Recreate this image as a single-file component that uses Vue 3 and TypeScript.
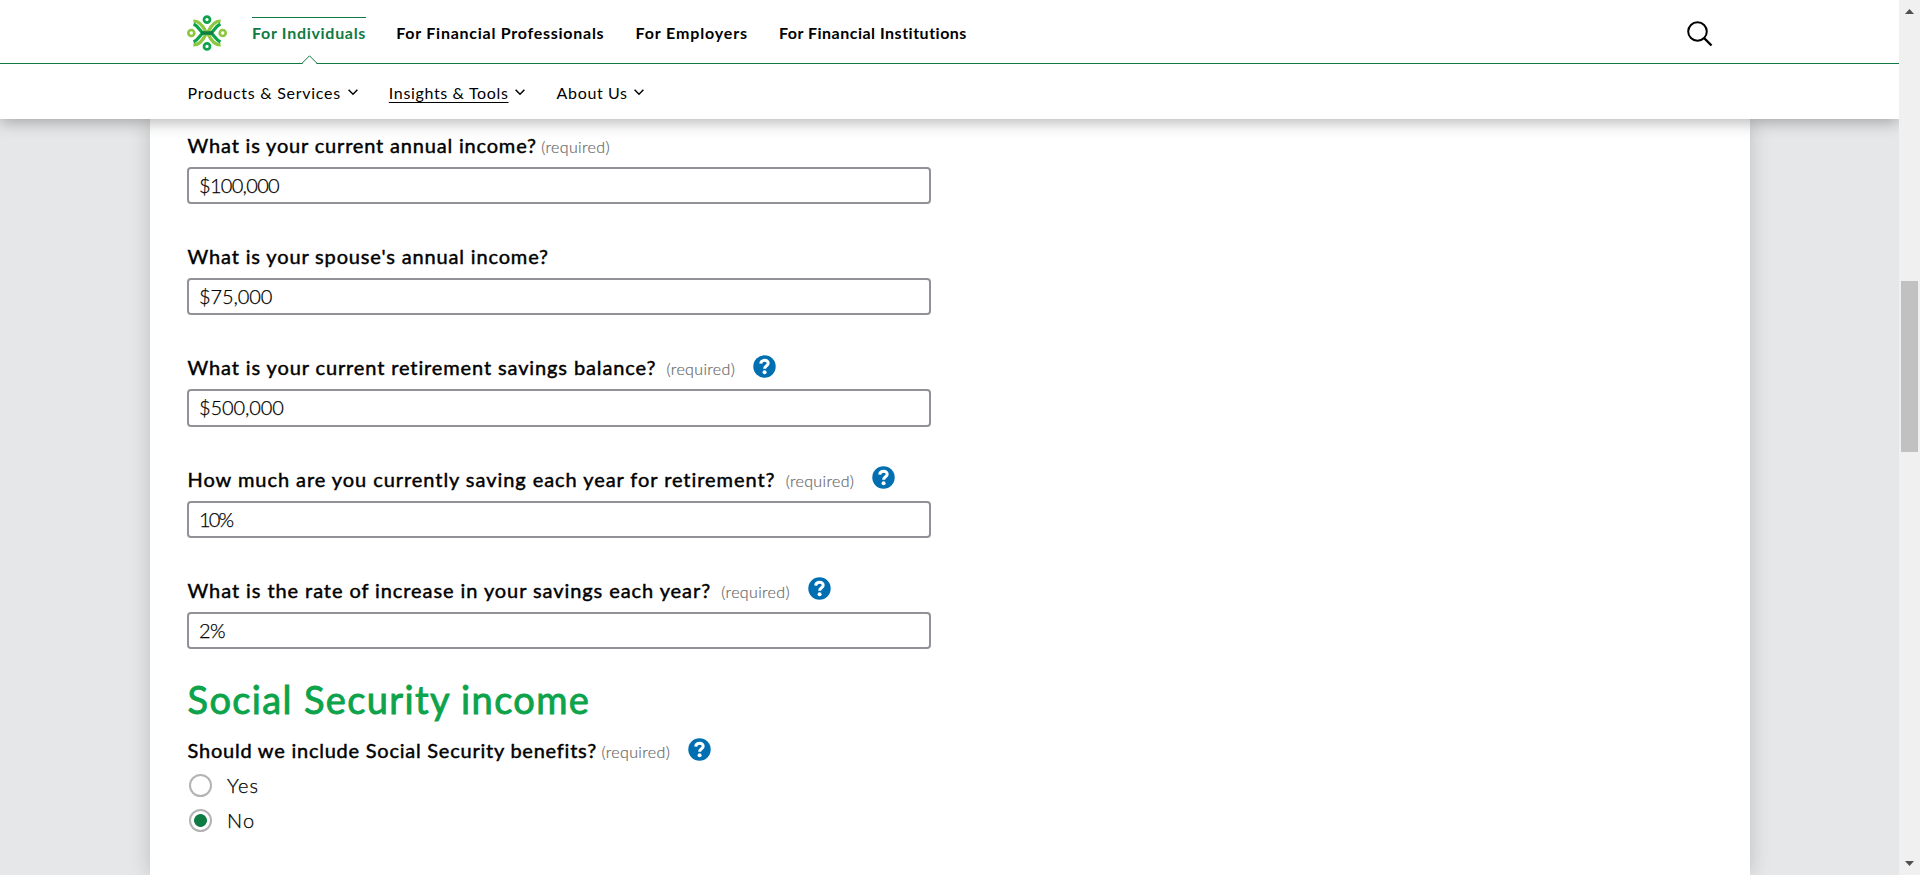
<script setup lang="ts">
import { ref } from 'vue'

interface NavItem { label: string; width: number; tracking: number; active?: boolean }
interface Field { id: string; label: string; tracking: number; required: boolean; help: boolean; value: string; valueTracking: number }

const audiences: NavItem[] = [
  { label: 'For Individuals', width: 114, tracking: 0.7, active: true },
  { label: 'For Financial Professionals', width: 209, tracking: 0.74 },
  { label: 'For Employers', width: 113, tracking: 0.86 },
  { label: 'For Financial Institutions', width: 190, tracking: 0.5 },
]

const sections: NavItem[] = [
  { label: 'Products & Services', width: 155, tracking: 0.72 },
  { label: 'Insights & Tools', width: 121.5, tracking: 0.65, active: true },
  { label: 'About Us', width: 72.5, tracking: 0.65 },
]

const fields = ref<Field[]>([
  { id: 'income', label: 'What is your current annual income?', tracking: 0.82, required: true, help: false, value: '$100,000', valueTracking: -0.7 },
  { id: 'spouse', label: "What is your spouse's annual income?", tracking: 0.85, required: false, help: false, value: '$75,000', valueTracking: -0.1 },
  { id: 'balance', label: 'What is your current retirement savings balance?', tracking: 0.88, required: true, help: true, value: '$500,000', valueTracking: -0.1 },
  { id: 'saving', label: 'How much are you currently saving each year for retirement?', tracking: 0.94, required: true, help: true, value: '10%', valueTracking: -1.8 },
  { id: 'rate', label: 'What is the rate of increase in your savings each year?', tracking: 0.92, required: true, help: true, value: '2%', valueTracking: -0.7 },
])

const choices = ['Yes', 'No']
const choice = ref('No')
const px = (n: number) => `${n}px`
</script>

<template>
  <div class="window">
    <div class="page">
      <header class="header">
        <div class="top">
          <svg class="logo" viewBox="0 0 40 36" fill="none" stroke-linecap="butt">
            <g stroke="#8dc63f" stroke-width="3.3">
              <path d="M6.4 6.2C12.8 5.8 16.4 11.5 19 17M33.6 6.2C27.2 5.8 23.6 11.5 21 17M6.4 29.8C12.8 30.2 16.4 24.5 19 19M33.6 29.8C27.2 30.2 23.6 24.5 21 19" />
              <circle cx="4.3" cy="18" r="3" stroke-width="2.6" />
              <circle cx="35.7" cy="18" r="3" stroke-width="2.6" />
            </g>
            <g stroke="#0ca34a" stroke-width="3.2">
              <path d="M6.6 9C11 11 12.6 15.2 15.8 18C12.6 20.8 11 25 6.6 27M33.4 9C29 11 27.4 15.2 24.2 18C27.4 20.8 29 25 33.4 27" />
              <circle cx="20" cy="4.6" r="3" stroke-width="2.7" />
              <circle cx="20" cy="31.4" r="3" stroke-width="2.7" />
            </g>
            <path d="M14 18H26" stroke="#0b7f40" stroke-width="3.6" />
          </svg>
          <nav class="audiences">
            <a v-for="a in audiences" :key="a.label" :class="['audience', { active: a.active }]" :style="{ width: px(a.width), letterSpacing: px(a.tracking) }">
              {{ a.label }}
              <svg v-if="a.active" class="notch" viewBox="0 0 17 10"><path d="M0.5 9.5L8.5 1L16.5 9.5V10H.5Z" fill="#fff" /><path d="M0.3 9L8.5 .8L16.7 9" fill="none" stroke="#117a43" /></svg>
            </a>
          </nav>
          <svg class="search" viewBox="0 0 26 26" fill="none" stroke="#000" stroke-width="2"><circle cx="10.5" cy="10.5" r="9.3" /><path d="M17 17L24.5 24.5" stroke-width="2.4" /></svg>
        </div>
        <nav class="sections">
          <a v-for="s in sections" :key="s.label" class="section">
            <span :class="{ current: s.active }" :style="{ width: px(s.width), letterSpacing: px(s.tracking) }">{{ s.label }}</span>
            <svg class="chevron" viewBox="0 0 10 7" fill="none" stroke="#000" stroke-width="1.5"><path d="M.6 .8L5 5.3L9.4 .8" /></svg>
          </a>
        </nav>
      </header>

      <main class="panel">
        <div v-for="f in fields" :key="f.id" class="field">
          <div :class="['caption', { spaced: f.help }]">
            <label class="question" :for="f.id" :style="{ letterSpacing: px(f.tracking) }">{{ f.label }}</label>
            <span v-if="f.required" class="required">(required)</span>
            <svg v-if="f.help" class="help" viewBox="0 0 23 23"><circle cx="11.5" cy="11.5" r="11.2" fill="#006fb2" /><path d="M7.7 8.6C8.2 4.3 15.2 4.4 15.2 8.2C15.2 10.9 11.6 10.6 11.6 13.8" fill="none" stroke="#fff" stroke-width="3" /><circle cx="11.6" cy="17.3" r="2" fill="#fff" /></svg>
          </div>
          <input :id="f.id" v-model="f.value" class="entry" type="text" :style="{ letterSpacing: px(f.valueTracking) }">
        </div>

        <h2 class="heading">Social Security income</h2>
        <div class="caption">
          <span class="question benefits">Should we include Social Security benefits?</span>
          <span class="required">(required)</span>
          <svg class="help" viewBox="0 0 23 23"><circle cx="11.5" cy="11.5" r="11.2" fill="#006fb2" /><path d="M7.7 8.6C8.2 4.3 15.2 4.4 15.2 8.2C15.2 10.9 11.6 10.6 11.6 13.8" fill="none" stroke="#fff" stroke-width="3" /><circle cx="11.6" cy="17.3" r="2" fill="#fff" /></svg>
        </div>
        <div class="choices">
          <label v-for="c in choices" :key="c" class="choice">
            <input v-model="choice" class="radio" type="radio" name="benefits" :value="c">
            <span>{{ c }}</span>
          </label>
        </div>
      </main>
    </div>

    <div class="scrollbar">
      <svg class="arrow" viewBox="0 0 9 5"><path d="M0 5L4.5 0L9 5Z" fill="#505050" /></svg>
      <div class="thumb"></div>
      <svg class="arrow down" viewBox="0 0 9 5"><path d="M0 0L4.5 5L9 0Z" fill="#505050" /></svg>
    </div>
  </div>
</template>

<style>
body { margin: 0; overflow: hidden; }
</style>

<style scoped>
.window { display: flex; height: 875px; overflow: hidden; font-family: Lato, "Open Sans", sans-serif; color: #000; }
.page { flex: 1; min-width: 0; display: flex; flex-direction: column; background: #e5e7e9; overflow: hidden; }
.header { position: relative; z-index: 2; flex: none; height: 119px; background: #fff; box-shadow: 0 3px 15px rgba(0, 0, 0, 0.3); }
.top { display: flex; align-items: center; box-sizing: border-box; height: 64px; padding-left: 187px; border-bottom: 1px solid #117a43; }
.logo { width: 40px; height: 36px; margin: 3px 25px 0 0; }
.audiences { display: flex; gap: 30.3px; align-self: flex-start; padding-top: 17px; }
.audience { position: relative; box-sizing: border-box; height: 47px; padding-top: 5px; border-top: 1px solid transparent; font-size: 16px; line-height: 20px; font-weight: 700; white-space: nowrap; }
.audience.active { color: #117a43; border-top-color: #117a43; }
.notch { position: absolute; left: 48.5px; top: 37px; width: 17px; height: 10px; }
.search { width: 26px; height: 26px; margin: 4px 186px 0 auto; }
.sections { display: flex; gap: 31.3px; height: 55px; padding: 1px 0 0 187.5px; box-sizing: border-box; }
.section { display: flex; align-items: center; gap: 5px; height: 56px; font-size: 16px; line-height: 20px; white-space: nowrap; box-sizing: border-box; }
.section span { display: block; }
.current { text-decoration: underline; text-decoration-thickness: 1px; text-underline-offset: 3px; }
.chevron { width: 10px; height: 7px; margin-top: -1px; }
.panel { flex: 1; box-sizing: border-box; width: 1600px; margin-left: 150px; padding: 12px 0 0 37px; background: #fff; box-shadow: 0 0 20px rgba(0, 0, 0, 0.18); }
.field { margin-bottom: 38px; }
.caption { display: flex; align-items: baseline; height: 28px; margin-bottom: 7.8px; padding-left: 0.6px; line-height: 28.6px; white-space: nowrap; }
.question { font-size: 20px; -webkit-text-stroke: 0.45px #000; }
.required { margin-left: 4.5px; font-size: 16px; font-weight: 300; letter-spacing: 0.35px; color: #6a6a6a; -webkit-text-stroke: 0.2px #6a6a6a; }
.spaced .required { margin-left: 10.3px; }
.help { align-self: flex-start; width: 23px; height: 23px; margin: 1.5px 0 0 18px; }
.entry { display: block; box-sizing: border-box; width: 744px; height: 37.45px; padding: 0 10px 1px; border: 2px solid #929197; border-radius: 4px; background: #fff; font-family: inherit; font-size: 20px; font-weight: 300; color: #000; outline: none; -webkit-text-stroke: 0.25px #000; }
.heading { margin: -12.3px 0 13.5px 0.6px; font-size: 38px; line-height: 48px; font-weight: 400; letter-spacing: 1.36px; color: #0ca34a; -webkit-text-stroke: 0.9px #0ca34a; }
.benefits { letter-spacing: 0.76px; }
.choices { display: flex; flex-direction: column; margin-top: -4px; }
.choice { display: flex; align-items: center; height: 35px; font-size: 20px; font-weight: 300; letter-spacing: 1.2px; -webkit-text-stroke: 0.25px #000; }
.choice span { padding-bottom: 2px; }
.radio { appearance: none; box-sizing: border-box; width: 23px; height: 23px; margin: 0 15px 0 2px; border: 2px solid #b3b3b3; border-radius: 50%; background: #fff; }
.radio:checked { background: radial-gradient(circle, #0e7c42 6px, #fff 6.8px); }
.scrollbar { display: flex; flex-direction: column; align-items: center; width: 21px; height: 875px; box-sizing: border-box; padding: 9px 0; background: #f0f0f0; }
.arrow { width: 9px; height: 5px; flex: none; }
.thumb { width: 17px; height: 171px; margin-top: 267px; background: #c1c1c1; }
.down { margin-top: auto; }
</style>
